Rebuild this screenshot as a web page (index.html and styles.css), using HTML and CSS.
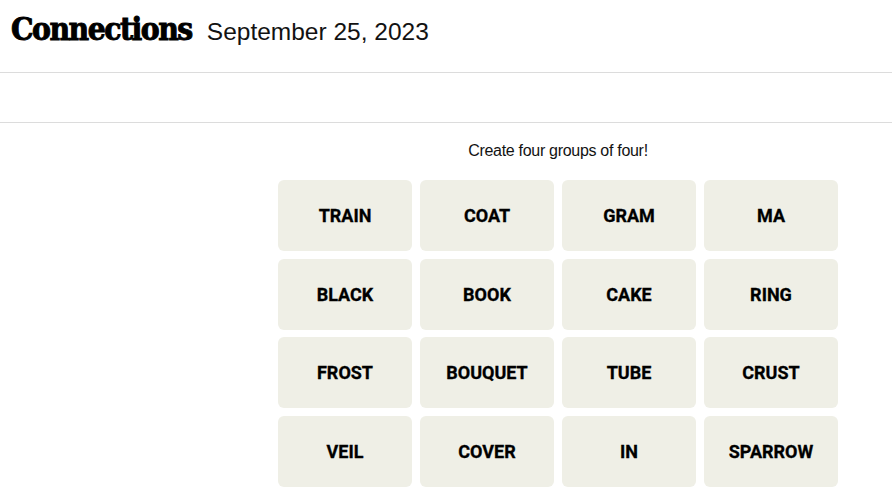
FILE: index.html
```html
<!DOCTYPE html>
<html lang="en">
<head>
  <meta charset="UTF-8" />
  <meta name="viewport" content="width=device-width, initial-scale=1.0" />
  <title>Connections</title>
  <link rel="stylesheet" href="styles.css">
</head>
<body>
  <!-- Header -->
  <header class="top-bar">
    <h1 class="title">Connections</h1>
    <span class="date">September 25, 2023</span>
  </header>

  <!-- Empty toolbar -->
  <div class="tool-bar"></div>

  <!-- Game Board -->
  <main class="game">
    <p class="prompt">Create four groups of four!</p>
    <div class="board">
      <button class="tile">TRAIN</button>
      <button class="tile">COAT</button>
      <button class="tile">GRAM</button>
      <button class="tile">MA</button>
      <button class="tile">BLACK</button>
      <button class="tile">BOOK</button>
      <button class="tile">CAKE</button>
      <button class="tile">RING</button>
      <button class="tile">FROST</button>
      <button class="tile">BOUQUET</button>
      <button class="tile">TUBE</button>
      <button class="tile">CRUST</button>
      <button class="tile">VEIL</button>
      <button class="tile">COVER</button>
      <button class="tile">IN</button>
      <button class="tile">SPARROW</button>
    </div>
  </main>
</body>
</html>
```

FILE: styles.css
```css
/* Reset */
* {
  margin: 0;
  padding: 0;
  box-sizing: border-box;
}
body {
  background: #fff;
  color: #000;
  font-family: "Liberation Sans", Arial, sans-serif;
  overflow: hidden;
}

/* Header */
.top-bar {
  height: 73px;
  display: flex;
  align-items: baseline;
  gap: 15px;
  padding: 13px 0 0 11px;
  border-bottom: 1px solid #dcdcdc;
}
.title {
  font-family: "DejaVu Serif", serif;
  font-stretch: condensed;
  font-weight: 700;
  font-size: 31.5px;
  line-height: 1;
  letter-spacing: -1.5px;
  -webkit-text-stroke: 0.9px #000;
}
.date {
  font-family: "Liberation Sans", Arial, sans-serif;
  font-size: 24.5px;
  line-height: 1;
  color: #121212;
}

/* Toolbar */
.tool-bar {
  height: 50px;
  border-bottom: 1px solid #dcdcdc;
}

/* Game */
.game {
  width: 560px;
  margin-left: 278px;
  text-align: center;
}
.prompt {
  font-size: 16px;
  line-height: 20px;
  letter-spacing: -0.3px;
  margin: 18px 0 19px;
  color: #121212;
}
.board {
  display: grid;
  grid-template-columns: repeat(4, 134px);
  grid-auto-rows: 71px;
  gap: 7.6px 8px;
}
.tile {
  border: none;
  border-radius: 6px;
  background-color: #efefe6;
  color: #000;
  font-family: "Roboto", "Liberation Sans", sans-serif;
  font-weight: 700;
  font-size: 18px;
  -webkit-text-stroke: 0.3px #000;
  cursor: pointer;
}
```
